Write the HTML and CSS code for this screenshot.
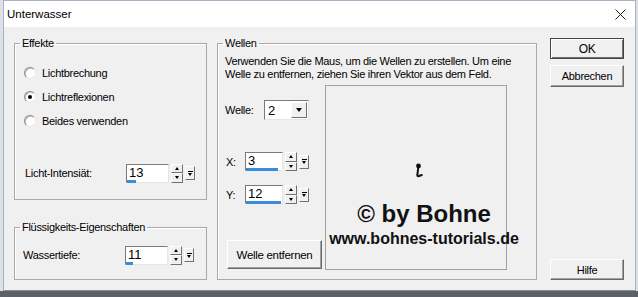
FILE: index.html
```html
<!DOCTYPE html>
<html lang="de">
<head>
    <meta charset="UTF-8">
    <title>Unterwasser</title>
    <link rel="stylesheet" href="styles.css">
</head>
<body>
    <div class="window">
        <div class="titlebar">
            <span class="title">Unterwasser</span>
            <svg class="close" width="11" height="11" viewBox="0 0 11 11">
                <path d="M0.5 0.5 L10.5 10.5 M10.5 0.5 L0.5 10.5" stroke="#222" stroke-width="1" fill="none"/>
            </svg>
        </div>

        <div class="client">
            <div class="col-left">
                <fieldset class="group effekte">
                    <legend>Effekte</legend>
                    <div class="options">
                        <div class="radio"><span class="dot"></span>Lichtbrechung</div>
                        <div class="radio checked"><span class="dot"></span>Lichtreflexionen</div>
                        <div class="radio"><span class="dot"></span>Beides verwenden</div>
                    </div>
                    <div class="spin-row intens">
                        <span class="lbl">Licht-Intensiät:</span>
                        <div class="spin">
                            <div class="field">13<span class="bar" style="width: 9px"></span></div>
                            <div class="arrows"><span class="up"></span><span class="down"></span></div>
                            <div class="drop"></div>
                        </div>
                    </div>
                </fieldset>

                <fieldset class="group fluid">
                    <legend>Flüssigkeits-Eigenschaften</legend>
                    <div class="spin-row tiefe">
                        <span class="lbl">Wassertiefe:</span>
                        <div class="spin">
                            <div class="field">11<span class="bar" style="width: 7px"></span></div>
                            <div class="arrows"><span class="up"></span><span class="down"></span></div>
                            <div class="drop"></div>
                        </div>
                    </div>
                </fieldset>
            </div>

            <fieldset class="group wellen">
                <legend>Wellen</legend>
                <p class="hint">Verwenden Sie die Maus, um die Wellen zu erstellen. Um eine<br>Welle zu entfernen, ziehen Sie ihren Vektor aus dem Feld.</p>
                <div class="wave-body">
                    <div class="wave-controls">
                        <div class="combo-row">
                            <span class="lbl">Welle:</span>
                            <div class="combo">
                                <span>2</span>
                                <div class="combo-btn"><span class="tri"></span></div>
                            </div>
                        </div>
                        <div class="spin-row xy first">
                            <span class="lbl">X:</span>
                            <div class="spin small">
                                <div class="field">3<span class="bar" style="width: 32px"></span></div>
                                <div class="arrows"><span class="up"></span><span class="down"></span></div>
                                <div class="drop"></div>
                            </div>
                        </div>
                        <div class="spin-row xy">
                            <span class="lbl">Y:</span>
                            <div class="spin small">
                                <div class="field">12<span class="bar" style="width: 35px"></span></div>
                                <div class="arrows"><span class="up"></span><span class="down"></span></div>
                                <div class="drop"></div>
                            </div>
                        </div>
                        <button class="btn remove">Welle entfernen</button>
                    </div>
                    <div class="preview">
                        <svg class="pin" width="9" height="15" viewBox="0 0 9 15">
                            <circle cx="4.5" cy="3" r="2.4" fill="#111"/>
                            <path d="M4.3 4 L3.4 11.5 Q3 13.6 5 13 L7.8 12" stroke="#111" stroke-width="2" fill="none" stroke-linecap="round"/>
                        </svg>
                        <div class="watermark">
                            <div class="wm-big">© by Bohne</div>
                            <div class="wm-small">www.bohnes-tutorials.de</div>
                        </div>
                    </div>
                </div>
            </fieldset>

            <div class="buttons">
                <button class="btn default">OK</button>
                <button class="btn cancel">Abbrechen</button>
                <button class="btn help">Hilfe</button>
            </div>
        </div>
    </div>
</body>
</html>
```

FILE: styles.css
```css
* {
    box-sizing: border-box;
}

body {
    margin: 0;
    width: 638px;
    height: 297px;
    overflow: hidden;
    background: linear-gradient(#dde0e4 0, #dde0e4 291px, #5a6169 291px);
    font-family: "Liberation Sans", Arial, sans-serif;
    font-size: 11px;
    letter-spacing: -0.3px;
    color: #000;
}

.window {
    margin-left: 3px;
    width: 633px;
    height: 291px;
    border: 1px solid #a7b3c2;
    border-bottom-color: #8c8c8c;
    background: #f0f0f0;
}

/* --- titelleiste --- */
.titlebar {
    height: 26px;
    background: #fff;
    display: flex;
    align-items: center;
    justify-content: space-between;
    padding: 0 9px 0 3px;
}

.title {
    font-size: 11.5px;
    letter-spacing: 0;
    color: #000;
}

/* --- inhalt --- */
.client {
    height: 263px;
    padding: 9px 10px 10px 10px;
    display: flex;
}

.col-left {
    width: 193px;
    display: flex;
    flex-direction: column;
    gap: 20px;
}

.group {
    margin: 0;
    padding: 0;
    border: 1px solid #a8a8a8;
    box-shadow: inset 1px 1px 0 #fff;
    min-width: 0;
}

.group legend {
    margin-left: 5px;
    padding: 0 2px;
    line-height: 14px;
}

.effekte {
    height: 164px;
}

.fluid {
    height: 60px;
}

.options {
    padding: 11px 0 0 9px;
}

.radio {
    height: 24px;
    display: flex;
    align-items: center;
    gap: 6px;
}

.dot {
    width: 12px;
    height: 12px;
    border-radius: 50%;
    background: #fff;
    border: 1px solid;
    border-color: #8a8a8a #e8e8e8 #e8e8e8 #8a8a8a;
    box-shadow: inset 1px 1px 0 #c8c8c8;
    display: flex;
    align-items: center;
    justify-content: center;
}

.checked .dot::after {
    content: "";
    width: 4px;
    height: 4px;
    border-radius: 50%;
    background: #000;
}

/* --- spinfelder --- */
.spin-row {
    height: 22px;
    display: flex;
    align-items: center;
}

.intens {
    margin-top: 29px;
    padding-left: 10px;
}

.intens .lbl {
    width: 101px;
}

.tiefe {
    margin-top: 10px;
    padding-left: 8px;
}

.tiefe .lbl {
    width: 102px;
}

.spin {
    display: flex;
    align-items: center;
    gap: 2px;
}

.field {
    position: relative;
    width: 43px;
    height: 19px;
    background: #fff;
    border: 1px solid;
    border-color: #7a7a7a #e6e6e6 #e6e6e6 #7a7a7a;
    font-size: 13px;
    letter-spacing: 0;
    line-height: 15px;
    padding-left: 2px;
}

.bar {
    position: absolute;
    left: 0;
    bottom: -1px;
    height: 3px;
    background: #3b8ddb;
}

.arrows {
    width: 12px;
    height: 19px;
    display: flex;
    flex-direction: column;
}

.arrows span {
    flex: 1;
    background: #f0f0f0;
    border: 1px solid;
    border-color: #fff #707070 #707070 #fff;
    display: flex;
    align-items: center;
    justify-content: center;
}

.arrows .up::after {
    content: "";
    border: 2px solid transparent;
    border-bottom: 3px solid #000;
    border-top: 0;
}

.arrows .down::after {
    content: "";
    border: 2px solid transparent;
    border-top: 3px solid #000;
    border-bottom: 0;
}

.drop {
    width: 10px;
    height: 14px;
    background: #f0f0f0;
    border: 1px solid;
    border-color: #fff #707070 #707070 #fff;
    display: flex;
    flex-direction: column;
    align-items: center;
    justify-content: center;
    gap: 1px;
}

.drop::before {
    content: "";
    width: 5px;
    height: 1px;
    background: #000;
}

.drop::after {
    content: "";
    border: 2.5px solid transparent;
    border-top: 3px solid #000;
    border-bottom: 0;
}

/* --- wellen --- */
.wellen {
    width: 320px;
    margin-left: 10px;
}

.hint {
    margin: 5px 0 0 7px;
    line-height: 13px;
    white-space: nowrap;
}

.wave-body {
    display: flex;
    gap: 4px;
    margin: 4px 0 0 7px;
}

.wave-controls {
    width: 96px;
    display: flex;
    flex-direction: column;
}

.combo-row {
    margin-top: 15px;
    height: 20px;
    display: flex;
    align-items: center;
}

.combo-row .lbl {
    width: 39px;
}

.combo {
    width: 45px;
    height: 20px;
    background: #fff;
    border: 1px solid;
    border-color: #7a7a7a #e6e6e6 #e6e6e6 #7a7a7a;
    display: flex;
    align-items: center;
    justify-content: space-between;
    font-size: 13px;
    letter-spacing: 0;
    padding-left: 3px;
}

.combo-btn {
    width: 16px;
    height: 16px;
    margin-right: 1px;
    background: #f0f0f0;
    border: 1px solid;
    border-color: #fff #707070 #707070 #fff;
    display: flex;
    align-items: center;
    justify-content: center;
}

.combo-btn .tri {
    border: 3.5px solid transparent;
    border-top: 4px solid #000;
    border-bottom: 0;
}

.xy {
    height: 21px;
    padding-left: 1px;
}

.xy.first {
    margin-top: 31px;
}

.xy + .xy {
    margin-top: 12px;
}

.xy .lbl {
    width: 19px;
}

.spin.small .field {
    width: 38px;
}

.btn {
    font-family: "Liberation Sans", Arial, sans-serif;
    font-size: 11px;
    letter-spacing: -0.3px;
    color: #000;
    background: #f0f0f0;
    border: 1px solid;
    border-color: #fff #696969 #696969 #fff;
    box-shadow: inset -1px -1px 0 #a0a0a0;
    padding: 0;
}

.remove {
    margin: 35px 0 0 2px;
    width: 95px;
    height: 29px;
    font-size: 11.5px;
}

.preview {
    position: relative;
    width: 182px;
    height: 185px;
    border: 1px solid #a0a0a0;
}

.pin {
    position: absolute;
    left: 88px;
    top: 77px;
}

.watermark {
    position: absolute;
    left: 0;
    top: 116px;
    width: 196px;
    text-align: center;
    font-weight: bold;
    letter-spacing: 0;
    color: #111;
    white-space: nowrap;
}

.wm-big {
    font-size: 24px;
    line-height: 24px;
}

.wm-small {
    margin-top: 5px;
    font-size: 16px;
    line-height: 16px;
}

/* --- knoepfe rechts --- */
.buttons {
    width: 74px;
    margin-left: 13px;
    display: flex;
    flex-direction: column;
}

.default {
    margin-top: 2px;
    height: 21px;
    font-size: 12px;
    border-color: #444;
    box-shadow: inset 1px 1px 0 #fff, inset -1px -1px 0 #707070;
}

.cancel {
    margin-top: 6px;
    height: 22px;
}

.help {
    margin-top: auto;
    height: 21px;
}
```
